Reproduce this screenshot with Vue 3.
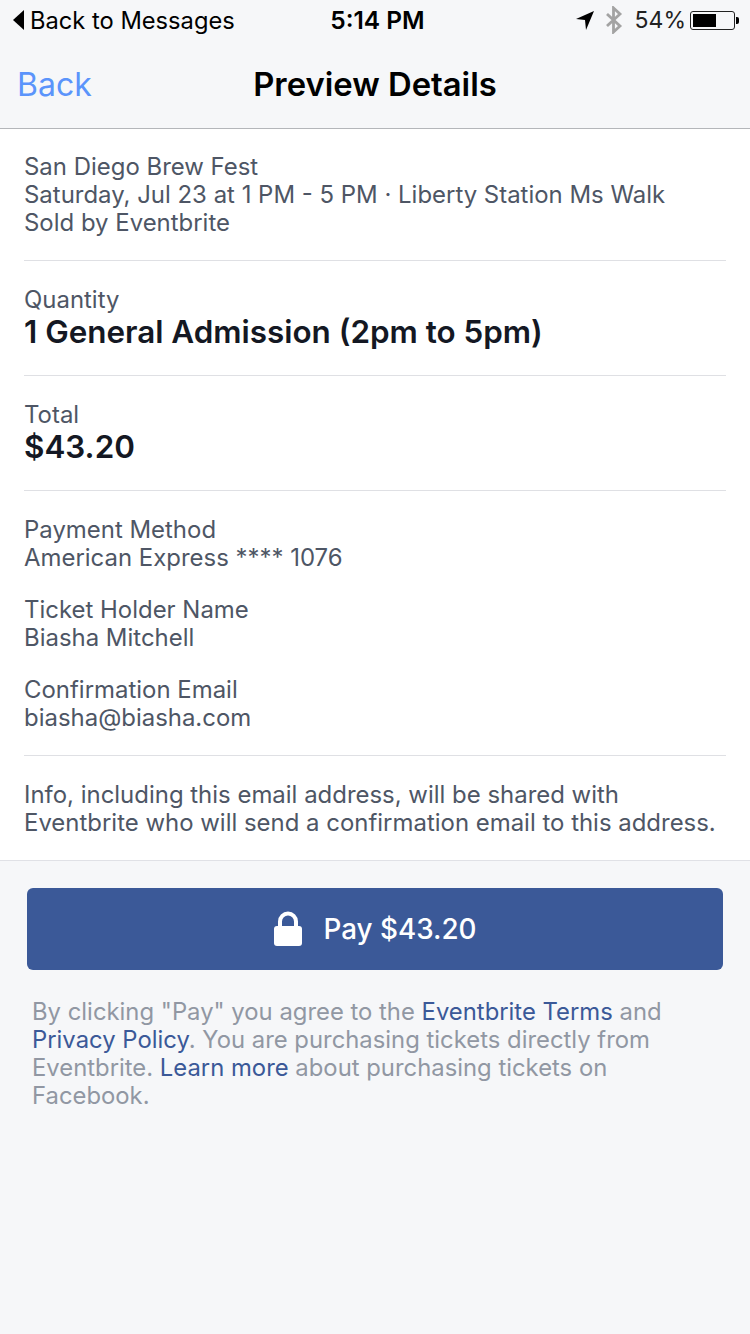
<script setup>
const contact = [
  { label: 'Payment Method', value: 'American Express **** 1076' },
  { label: 'Ticket Holder Name', value: 'Biasha Mitchell' },
  { label: 'Confirmation Email', value: 'biasha@biasha.com' }
]
</script>

<template>
  <div class="page">
    <div class="status">
      <div class="status__left">
        <svg class="status__caret" width="13" height="22" viewBox="0 0 13 22">
          <path d="M12 1v20L1 11z" fill="#000" />
        </svg>
        <span>Back to Messages</span>
      </div>
      <div class="status__time">5:14 PM</div>
      <div class="status__right">
        <svg class="status__arrow" width="20" height="20" viewBox="0 0 20 20">
          <path d="M19 1 1 9l9 1 1 10z" fill="#000" />
        </svg>
        <svg class="status__bt" width="18" height="28" viewBox="0 0 18 28">
          <path d="M2 8l13 12-6.500 6V2L15 8 2 20" fill="none" stroke="#a3a3a3" stroke-width="2.800" />
        </svg>
        <span class="status__pct">54%</span>
        <div class="battery">
          <div class="battery__body"><div class="battery__fill"></div></div>
          <div class="battery__tip"></div>
        </div>
      </div>
    </div>

    <div class="nav">
      <span class="nav__back">Back</span>
      <span class="nav__title">Preview Details</span>
    </div>

    <div class="details">
      <div class="section section--first">
        <div>San Diego Brew Fest</div>
        <div>Saturday, Jul 23 at 1 PM - 5 PM · Liberty Station Ms Walk</div>
        <div>Sold by Eventbrite</div>
      </div>
      <div class="section">
        <div>Quantity</div>
        <div class="big">1 General Admission (2pm to 5pm)</div>
      </div>
      <div class="section">
        <div>Total</div>
        <div class="big">$43.20</div>
      </div>
      <div class="section section--stack">
        <div v-for="item in contact" :key="item.label">
          <div>{{ item.label }}</div>
          <div>{{ item.value }}</div>
        </div>
      </div>
      <div class="section section--last">
        <div>Info, including this email address, will be shared with</div>
        <div>Eventbrite who will send a confirmation email to this address.</div>
      </div>
    </div>

    <div class="bottom">
      <div class="pay">
        <svg class="pay__lock" width="28" height="36" viewBox="0 0 28 36">
          <path d="M6 17V10.500a8 8 0 0 1 16 0V17" fill="none" stroke="#fff" stroke-width="4" />
          <rect y="15" width="28" height="20" rx="3" fill="#fff" />
        </svg>
        <span>Pay $43.20</span>
      </div>
      <p class="legal">
        By clicking "Pay" you agree to the <span class="link">Eventbrite Terms</span> and
        <span class="link">Privacy Policy</span>. You are purchasing tickets directly from
        Eventbrite. <span class="link">Learn more</span> about purchasing tickets on
        Facebook.
      </p>
    </div>
  </div>
</template>

<style>
body {
  background: #f6f7f9;
}
</style>

<style scoped>
.page {
  width: 750px;
  height: 1334px;
  background: #f6f7f9;
  font-family: Inter, 'Liberation Sans', sans-serif;
  overflow: hidden;
}

.status {
  height: 40px;
  display: grid;
  grid-template-columns: 1fr auto 1fr;
  align-items: center;
  color: #000;
}

.status__left {
  display: flex;
  align-items: center;
  gap: 5px;
  padding-left: 12px;
  font-size: 23.700px;
}

.status__time {
  padding-left: 5px;
  font-size: 24.500px;
  font-weight: 600;
}

.status__right {
  display: flex;
  align-items: center;
  justify-content: flex-end;
  padding-right: 11px;
}

.status__arrow {
  margin-right: 10px;
}

.status__bt {
  margin-right: 12px;
}

.status__pct {
  font-size: 23px;
  margin-right: 4px;
  color: #222;
}

.battery {
  display: flex;
  align-items: center;
}

.battery__body {
  width: 45px;
  height: 19px;
  border: 1px solid #222;
  border-radius: 3px;
  padding: 2px;
  box-sizing: border-box;
}

.battery__fill {
  width: 23px;
  height: 100%;
  background: #000;
}

.battery__tip {
  width: 3px;
  height: 7px;
  margin-left: 1px;
  background: #000;
  border-radius: 0 2px 2px 0;
}

.nav {
  position: relative;
  height: 88px;
  border-bottom: 1px solid #b4b6ba;
  display: flex;
  align-items: center;
  justify-content: center;
}

.nav__back {
  position: absolute;
  left: 17px;
  font-size: 32px;
  color: #5b94fb;
}

.nav__title {
  font-size: 32.800px;
  font-weight: 600;
  color: #000;
}

.details {
  background: #fff;
  border-bottom: 1px solid #e0e1e6;
  padding: 0 24px;
  color: #4e5665;
  font-size: 23.950px;
  line-height: 28px;
}

.section {
  padding: 25px 0 23px;
  border-bottom: 1px solid #dfe0e4;
}

.section--first {
  padding-top: 24px;
}

.section--last {
  border-bottom: none;
}

.section--stack {
  display: flex;
  flex-direction: column;
  gap: 24px;
}

.big {
  margin: -1px 0 1px;
  font-size: 31.400px;
  line-height: 38px;
  font-weight: 600;
  color: #141823;
}

.bottom {
  padding: 27px 27px 0;
}

.pay {
  height: 82px;
  border-radius: 6px;
  background: #3b5998;
  color: #fff;
  display: flex;
  align-items: center;
  justify-content: center;
  gap: 22px;
  font-size: 27.800px;
  font-weight: 500;
}

.legal {
  margin: 28px 0 0;
  padding: 0 5px;
  font-size: 23.850px;
  line-height: 28px;
  color: #9197a3;
}

.link {
  color: #3b5998;
}
</style>
